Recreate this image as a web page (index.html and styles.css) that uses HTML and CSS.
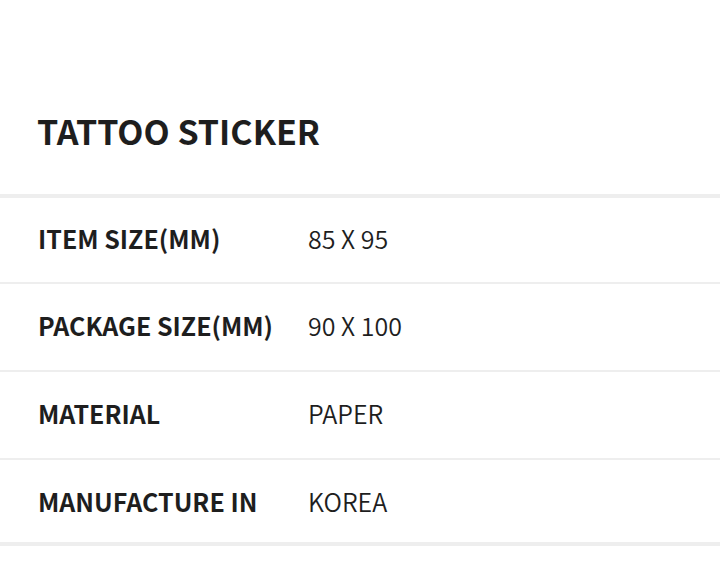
FILE: index.html
```html
<!DOCTYPE html>
<html lang="en">
  <head>
    <meta charset="UTF-8" />
    <meta name="viewport" content="width=device-width, initial-scale=1.0" />
    <title>Tattoo Sticker</title>
    <link rel="stylesheet" href="styles.css">
  </head>
  <body>
    <div class="product-info">
      <div class="header">
        <h1>TATTOO STICKER</h1>
      </div>

      <div class="spec-table">
        <div class="spec-row">
          <div class="spec-label">ITEM SIZE(MM)</div>
          <div class="spec-value">85 X 95</div>
        </div>
        <div class="spec-row">
          <div class="spec-label">PACKAGE SIZE(MM)</div>
          <div class="spec-value">90 X 100</div>
        </div>
        <div class="spec-row">
          <div class="spec-label">MATERIAL</div>
          <div class="spec-value">PAPER</div>
        </div>
        <div class="spec-row last">
          <div class="spec-label">MANUFACTURE IN</div>
          <div class="spec-value">KOREA</div>
        </div>
      </div>
    </div>
  </body>
</html>
```

FILE: styles.css
```css
body {
  font-family: "Noto Sans CJK KR", "Noto Sans", sans-serif;
  margin: 0;
  padding: 0;
  background-color: #fff;
  color: #1e1e1e;
}
.product-info {
  padding-top: 100px;
}
.header {
  padding: 0 37px;
  height: 94px;
}
.header h1 {
  margin: 0;
  font-size: 34px;
  font-weight: 700;
  line-height: 62px;
}
.spec-table {
  border-top: 4px solid #eee;
  border-bottom: 4px solid #eee;
}
.spec-row {
  display: flex;
  align-items: center;
  box-sizing: border-box;
  height: 88px;
  padding-bottom: 4px;
  border-bottom: 2px solid #eee;
}
.spec-row:first-child {
  height: 86px;
  padding-bottom: 5px;
}
.spec-row.last {
  height: 82px;
  padding-bottom: 0;
  border-bottom: none;
}
.spec-label {
  width: 270px;
  padding-left: 38px;
  font-size: 25px;
  font-weight: 700;
}
.spec-value {
  font-size: 25px;
  font-weight: 350;
}
```
